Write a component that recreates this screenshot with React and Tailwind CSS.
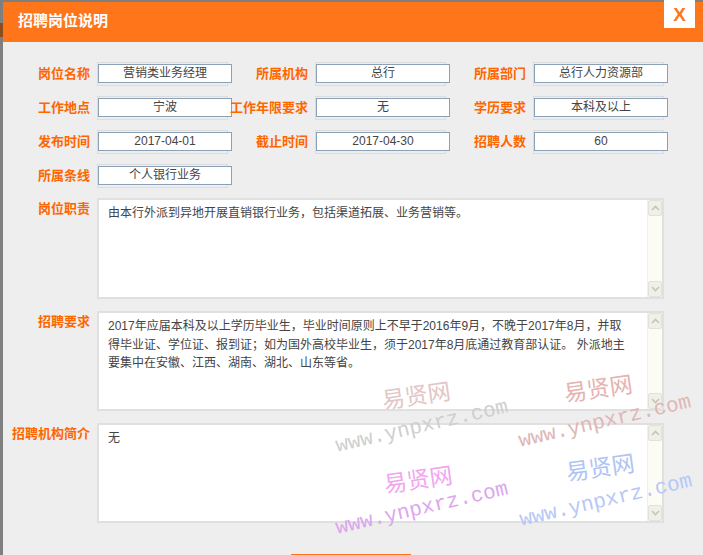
import React from 'react';

const fields = [
  [
    ['岗位名称', '营销类业务经理'],
    ['所属机构', '总行'],
    ['所属部门', '总行人力资源部'],
  ],
  [
    ['工作地点', '宁波'],
    ['工作年限要求', '无'],
    ['学历要求', '本科及以上'],
  ],
  [
    ['发布时间', '2017-04-01'],
    ['截止时间', '2017-04-30'],
    ['招聘人数', '60'],
  ],
  [['所属条线', '个人银行业务']],
];

const boxes = [
  {
    label: '岗位职责',
    h: 'h-[101px]',
    mt: 'mt-[10px]',
    lines: ['由本行外派到异地开展直销银行业务，包括渠道拓展、业务营销等。'],
  },
  {
    label: '招聘要求',
    h: 'h-[100px]',
    mt: 'mt-[12px]',
    lines: [
      '2017年应届本科及以上学历毕业生，毕业时间原则上不早于2016年9月，不晚于2017年8月，并取',
      '得毕业证、学位证、报到证；如为国外高校毕业生，须于2017年8月底通过教育部认证。 外派地主',
      '要集中在安徽、江西、湖南、湖北、山东等省。',
    ],
  },
  {
    label: '招聘机构简介',
    h: 'h-[100px]',
    mt: 'mt-[12px]',
    lines: ['无'],
  },
];

// watermark overlay: [text, centerX, centerY, width, color, rotate, kind]
const marks = [
  ['易贤网', 416, 394, 76, 'text-[#e2c6c6]', '-rotate-[8deg]', 'cn'],
  ['www.ynpxrz.com', 422, 427, 180, 'text-[#cfcfcf]', '-rotate-[13deg]', 'en'],
  ['易贤网', 598, 387, 76, 'text-[#e6b2b2]', '-rotate-[8deg]', 'cn'],
  ['www.ynpxrz.com', 605, 422, 180, 'text-[#e0b6b6]', '-rotate-[13deg]', 'en'],
  ['易贤网', 418, 478, 76, 'text-[#f2a6ee]', '-rotate-[8deg]', 'cn'],
  ['www.ynpxrz.com', 422, 509, 180, 'text-[#dca6ee]', '-rotate-[13deg]', 'en'],
  ['易贤网', 600, 466, 76, 'text-[#b0c4f4]', '-rotate-[8deg]', 'cn'],
  ['www.ynpxrz.com', 606, 501, 180, 'text-[#b6c8f8]', '-rotate-[13deg]', 'en'],
];

function Chevron({ up }) {
  return (
    <svg width="9" height="6" viewBox="0 0 9 6">
      <path
        d={up ? 'M1 5 L4.5 1.5 L8 5' : 'M1 1 L4.5 4.5 L8 1'}
        fill="none"
        stroke="#c4c4bc"
        strokeWidth="1.6"
      />
    </svg>
  );
}

function Scrollbar() {
  return (
    <div className="w-[15px] h-full flex flex-col bg-[#fcfcf4] border-l border-[#f0f0e8]">
      <div className="h-[16px] shrink-0 bg-[#f0f0e8] border border-[#e2e2da] rounded-[2px] flex items-center justify-center">
        <Chevron up />
      </div>
      <div className="flex-1" />
      <div className="h-[16px] shrink-0 bg-[#f0f0e8] border border-[#e2e2da] rounded-[2px] flex items-center justify-center">
        <Chevron />
      </div>
    </div>
  );
}

export default function App() {
  return (
    <div
      className="relative w-[703px] h-[555px] overflow-hidden bg-[#eeeeee] flex items-start"
      style={{ fontFamily: '"Liberation Sans", "Noto Sans CJK SC", sans-serif' }}
    >
      {/* left edge of page behind */}
      <div className="w-[3px] h-[555px] shrink-0 bg-[#7f7f7f]">
        <div className="h-[23px]" />
        <div className="h-[14px] bg-[#8c4c1c]" />
      </div>

      <div className="flex-1 min-w-0">
        <div className="h-[2px] bg-[#7f7f7f]" />

        {/* Header */}
        <div className="h-[40px] bg-[#ff761a] flex items-start justify-between">
          <div className="pl-[15px] pt-[9px] text-[15px] leading-[20px] font-bold text-white">招聘岗位说明</div>
          <div className="-mt-[2px] mr-[8px] w-[31px] h-[28px] bg-white flex items-center justify-center text-[19px] font-bold text-[#ff761a] leading-none">
            X
          </div>
        </div>

        {/* Fields */}
        <div className="pl-[11px] pt-[20px] flex flex-col gap-[10px]">
          {fields.map((row, i) => (
            <div key={i} className="flex h-[24px] items-center">
              {row.map(([label, value]) => (
                <div key={label} className="w-[218px] flex items-center">
                  <div className="w-[76px] mr-[7px] text-[13px] font-bold text-[#ff6600] whitespace-nowrap leading-[16px] flex justify-end">
                    {label}
                  </div>
                  <div className="w-[131px] h-[24px] border border-[#dcdcdc]">
                    <div className="w-[134px] h-[19px] mt-[1px] border border-[#8ba1b8] bg-white text-center text-[12px] leading-[17px] text-[#444]">
                      {value}
                    </div>
                  </div>
                </div>
              ))}
            </div>
          ))}
        </div>

        {/* Text boxes */}
        <div className="pl-[11px]">
          {boxes.map((b) => (
            <div key={b.label} className={`flex ${b.mt}`}>
              <div className="w-[76px] mr-[7px] pt-[3px] text-[13px] font-bold text-[#ff6600] whitespace-nowrap leading-[16px] flex justify-end">
                {b.label}
              </div>
              <div className={`w-[567px] ${b.h} bg-white border-2 border-[#e0e0e0] flex`}>
                <div className="flex-1 pl-[9px] pt-[4px] text-[12px] leading-[18.5px] text-[#444]">
                  {b.lines.map((l, i) => (
                    <div key={i} className="whitespace-nowrap">{l}</div>
                  ))}
                </div>
                <Scrollbar />
              </div>
            </div>
          ))}

          <div className="mt-[31px] ml-[277px] w-[120px] h-[30px] bg-[#ff761a]" />
        </div>
      </div>

      {/* Watermarks */}
      {marks.map(([t, cx, cy, w, color, rot, kind], i) => (
        <div
          key={i}
          className={`absolute pointer-events-none text-center whitespace-nowrap ${color} ${rot} ${
            kind === 'cn' ? 'text-[23px] leading-[24px]' : 'text-[21px] leading-[18px]'
          }`}
          style={{
            left: cx - w / 2,
            top: cy - (kind === 'cn' ? 12 : 9),
            width: w,
            fontFamily: kind === 'cn' ? '"Noto Sans CJK SC", sans-serif' : '"Liberation Mono", monospace',
          }}
        >
          {t}
        </div>
      ))}
    </div>
  );
}
